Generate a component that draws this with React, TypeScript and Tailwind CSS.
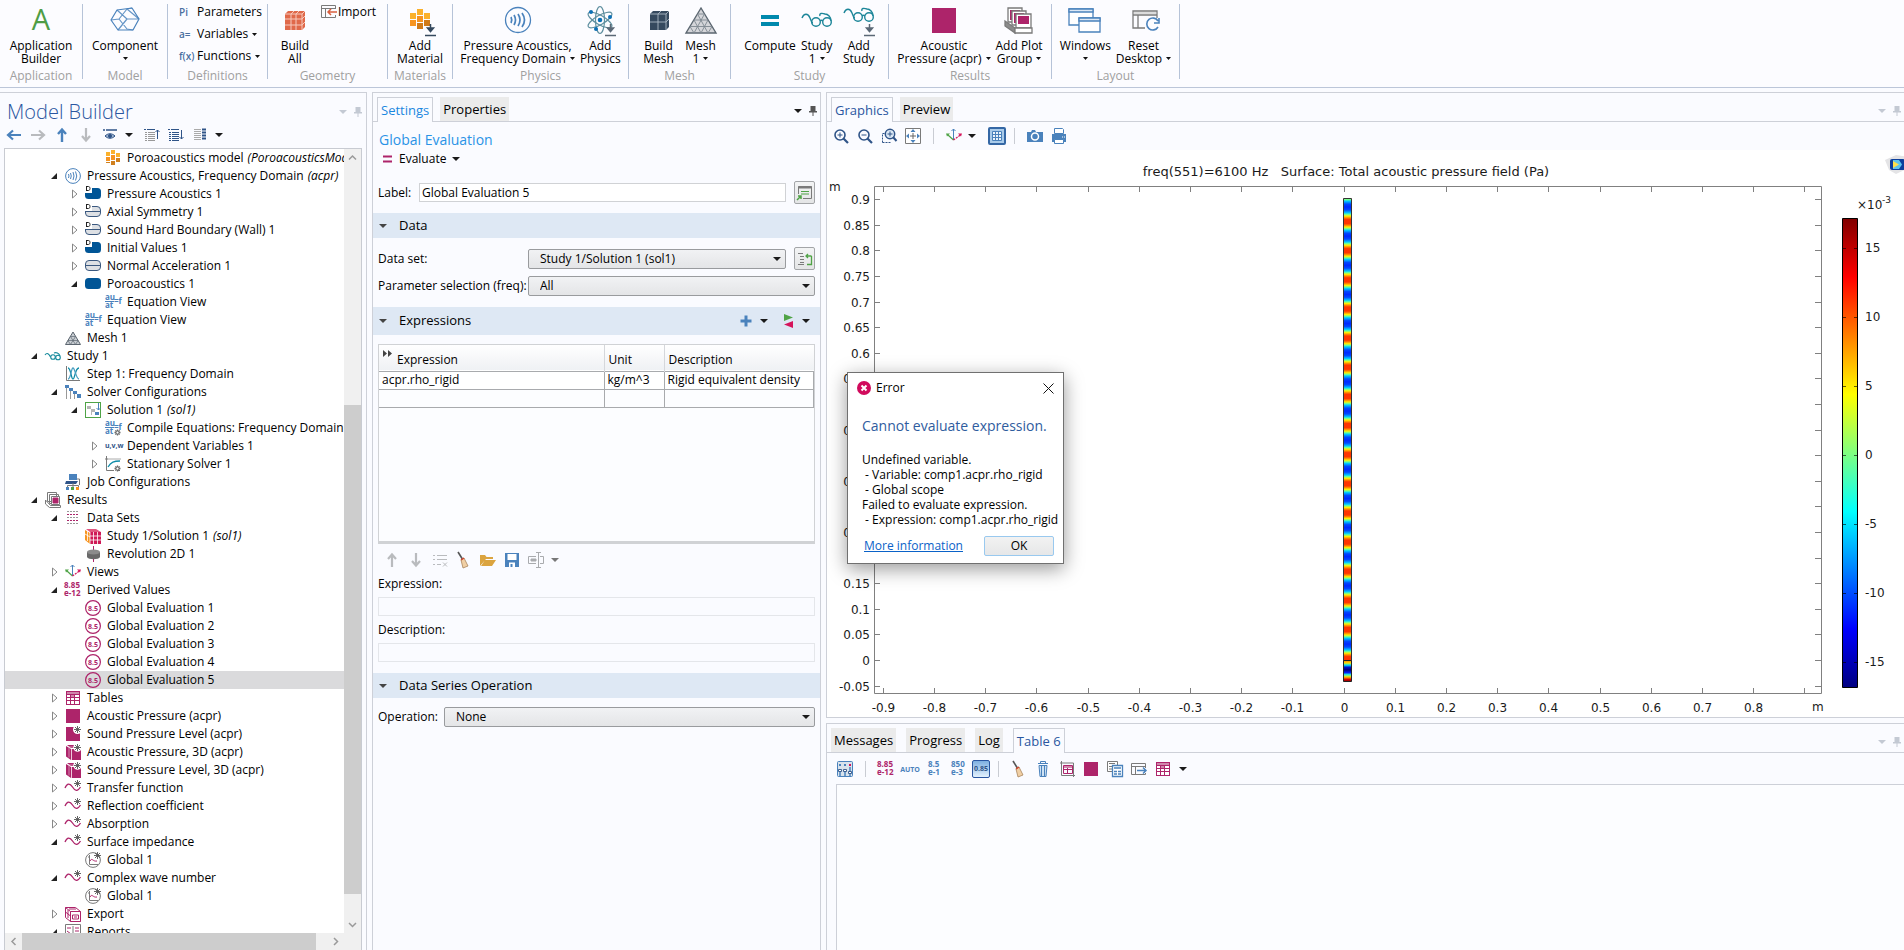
import type { ReactNode } from "react";

/* ---------- icons, 16x16 ---------- */

const PINK = "#ad246a";
const BLUE = "#4a82bc";
const NAVY = "#2f5488";
const GRAY = "#7a7a7a";

const star = (
  <path d="M12.500 0v7M9 3.500h7M10 1l5 5M15 1l-5 5" stroke="#555" strokeWidth=".9" />
);

const gear = (
  <g>
    <path d="M12.500 9.500v6M9.500 12.500h6M10.400 10.400l4.200 4.200M14.600 10.400l-4.200 4.200" stroke="#6b6b6b" strokeWidth="1.300" />
    <circle cx="12.500" cy="12.500" r="1.500" fill="#fff" stroke="#6b6b6b" />
  </g>
);

const equation = (
  <g fill={BLUE} fontSize="8" fontWeight="700">
    <text x="0" y="6">au</text>
    <text x="0" y="14">at</text>
    <text x="9" y="10" fontSize="8">=f</text>
    <path d="M0 7.500h9" stroke={BLUE} />
  </g>
);

const curve = <path d="M0 8c2-5 5-5 7.500-1s5 5 8 0" stroke={PINK} fill="none" strokeWidth="1.300" />;

const dMark = (
  <g>
    <path d="M0 0h7v7H0z" fill="#fff" />
    <path d="M1 .5h2.500c2 0 2 4 0 4H1M1.500.5v4" stroke="#222" fill="none" />
  </g>
);

const boundary = (
  <g>
    <rect x=".5" y="2.500" width="15" height="10" rx="3.500" fill="#dde0e4" stroke="#3a587f" />
    <path d="M1 7.500h14" stroke="#3a587f" />
  </g>
);

const domain = <rect x="0" y="2" width="16" height="11" rx="3.500" fill="#005596" />;

const cubePlot = (
  <g>
    <path d="M1 2l5 3v11l-5-3.500zM2 1h8l5 3H6zM7 5h9v11H7z" fill={PINK} />
    <path d="M6.500 5v11M4 3.500v10M4 3h8" stroke="#e7b3cd" strokeWidth=".7" />
    <circle cx="12.500" cy="3.500" r="4.200" fill="#fff" />
    {star}
  </g>
);

const broom = (
  <g>
    <path d="M2 0l5 8" stroke="#555" strokeWidth="1.600" />
    <path d="M5 8l3-2 4 8-5 2z" fill="#f0cfa4" stroke="#a8845c" strokeWidth=".8" />
    <path d="M5 8l3-2" stroke="#d2452f" strokeWidth="1.500" />
  </g>
);

const axes = (
  <g fill="none">
    <path d="M7.500 12V1M5.500 3l2-2 2 2" stroke={BLUE} />
    <path d="M7.500 12L2 7" stroke="#4fa346" strokeWidth="1.200" />
    <path d="M7.500 12l7-5" stroke="#d5145b" strokeDasharray="2 1" strokeWidth="1.200" />
    <path d="M0 5.500h4l-3 3z" fill="#4fa346" />
    <path d="M12 5.500h4l-1 3z" fill="#d5145b" />
  </g>
);

const grid = (
  <g>
    <path d="M1 1h14v14H1z" fill={PINK} />
    <path d="M2 5h3v2H2zM6 5h3v2H6zM10 5h4v2h-4zM2 8h3v2H2zM6 8h3v2H6zM10 8h4v2h-4zM2 11h3v3H2zM6 11h3v3H6zM10 11h4v3h-4z" fill="#fff" />
    <path d="M6 5h3v2H6zM2 2h12v2H2z" fill="#cf86ab" />
  </g>
);

const magnifier = (
  <g fill="none" stroke={NAVY}>
    <circle cx="7" cy="7" r="5" strokeWidth="1.600" />
    <path d="M10.500 10.500l4.500 4.500" strokeWidth="2.200" />
  </g>
);

const arrowUp = "M8 15V3M4 7l4-4.500L12 7";
const arrowDown = "M8 1v12M4 9l4 4.500L12 9";

const icons: Record<string, ReactNode> = {
  material: (
    <g>
      <path d="M1 2h4v4H1zM6 0h4v4H6zM11 3h4v4h-4z" fill="#fbb12b" />
      <path d="M1 7h4v4H1zM6 5h4v5H6z" fill="#f79420" />
      <path d="M1 12h4v1H1zM6 11h4v4H6zM11 8h4v4h-4z" fill="#d0801f" />
    </g>
  ),
  acoustics: (
    <g fill="none" stroke={BLUE}>
      <circle cx="8" cy="8" r="7.400" />
      <path d="M3.500 6q1 2 0 4M5.500 5q1.500 3 0 6M8 4q2 4 0 8M10.500 3.500q2.500 4.500 0 9" />
    </g>
  ),
  domainD: <g>{domain}{dMark}</g>,
  domain,
  boundaryD: <g>{boundary}{dMark}</g>,
  boundary,
  equation,
  mesh: (
    <g>
      <path d="M8 2l7.500 12.500H.5z" fill="#c9ced3" stroke="#5c6670" />
      <path d="M5.500 6.500h5M3 10.500h10M5.500 6.500l5 8M10.500 6.500l-5 8M3 10.500l2.500 4M13 10.500l-2.500 4" stroke="#5c6670" fill="none" strokeWidth=".7" />
    </g>
  ),
  study: (
    <g fill="none" stroke="#158a9c" strokeWidth="1.100">
      <path d="M0 7c2-3 4-1 5.500 2" />
      <circle cx="8" cy="9" r="2.300" />
      <circle cx="13" cy="9.500" r="2.300" />
      <path d="M9 5c2-1 5 0 6 3" />
    </g>
  ),
  step: (
    <g fill="none">
      <path d="M1.500 0v14.500H15" stroke={GRAY} />
      <path d="M3 2c3 0 3 11 5 11s2-11 6-11" stroke="#0e8ba8" strokeWidth="1.300" />
      <path d="M3 13c3 0 3-11 5-11s3 11 6 11" stroke="#4a9ec0" strokeWidth="1.300" />
    </g>
  ),
  solver: (
    <g>
      <path d="M1.500 3v12M5.500 6v9M9.500 9v6" stroke="#999" />
      <path d="M0 1h4v3H0zM4 4h4v3H4zM8 7h4v3H8zM12 10h4v4h-4z" fill={BLUE} />
    </g>
  ),
  solution: (
    <g>
      <rect x=".5" y=".5" width="15" height="15" fill="#fff" stroke="#4fa346" />
      <path d="M2 4h4v3H2zM6 7h4v3H6z" fill="#b5b5b5" />
      <path d="M6.500 8v5" stroke="#b5b5b5" />
      <path d="M10 10h4v3h-4z" fill={BLUE} />
      <path d="M13.500 1v7M11.500 6l2 2 2-2" stroke={BLUE} fill="none" />
    </g>
  ),
  compile: <g>{equation}{gear}</g>,
  uvw: <text x="0" y="10" fontSize="7" fontWeight="700" fill={NAVY}>u,v,w</text>,
  stationary: (
    <g fill="none">
      <path d="M1.500 0v14.500H9M0 3h3M13 14.500h2" stroke={GRAY} />
      <path d="M2 3h14" stroke="#aaa" />
      <path d="M3 11c3-5 6-6 12-6" stroke="#0e8ba8" strokeWidth="1.300" />
      {gear}
    </g>
  ),
  job: (
    <g>
      <path d="M4 0h8v6H4z" fill={BLUE} />
      <path d="M1 7h12l-2 3H0z" fill={NAVY} />
      <path d="M2.500 13v-1.500h11V13M8 9v4M12 5h2.500v6" stroke={GRAY} fill="none" />
      <path d="M1 13h3v3H1z" fill={BLUE} />
      <path d="M6 13h3v3H6z" fill="#4fa346" />
      <path d="M11 13h3v3h-3z" fill="#f79420" />
    </g>
  ),
  results: (
    <g stroke={GRAY}>
      <path d="M2.500.5h9v9h-9zM4.500 2.500h9v9h-9z" fill="#fff" />
      <path d="M6.500 4.500h8v8h-8z" fill="#fff" />
      <path d="M8 6h5v5H8z" fill={PINK} stroke={PINK} />
      <path d="M.5 8v4l4 3.500h11v-2h-10z" fill="#fff" />
    </g>
  ),
  dataSets: (
    <g strokeDasharray="2 1">
      <path d="M2 1.500h12M2 7.500h12M2 13.500h12" stroke="#999" />
      <path d="M2 4.500h12M2 10.500h12" stroke={PINK} />
    </g>
  ),
  solutionCube: (
    <g>
      <path d="M0 2l5 3v11l-5-4z" fill="#f79420" />
      <path d="M1 1h10l5 3H5z" fill="#e0567f" />
      <path d="M5 4h11v12H5z" fill="#cf1856" />
      <path d="M5 8h11M5 12h11M8.500 4v12M12.500 4v12M5 4v12M2.500 3v10M0 6l5 3" stroke="#fff" strokeWidth=".8" />
    </g>
  ),
  revolution: (
    <g>
      <path d="M8.500 0v16" stroke={PINK} />
      <path d="M2 6v5c1 3 12 3 13 0V6z" fill="#696969" />
      <ellipse cx="8.500" cy="6" rx="6.500" ry="2.500" fill="#8b8b8b" />
    </g>
  ),
  axes,
  derived: (
    <g fill={PINK} fontSize="8" fontWeight="700">
      <text x="-1" y="6">8.85</text>
      <text x="-1" y="14">e-12</text>
    </g>
  ),
  evaluation: (
    <g>
      <circle cx="8" cy="8" r="7.400" fill="none" stroke={PINK} strokeWidth="1.200" />
      <text x="8" y="11" fontSize="7" fontWeight="700" textAnchor="middle" fill={PINK}>8.5</text>
    </g>
  ),
  grid,
  square: <path d="M1 1h14v14H1z" fill={PINK} />,
  squareStar: (
    <g>
      <path d="M1 1h14v14H1z" fill={PINK} />
      <circle cx="12.500" cy="3.500" r="4.500" fill="#fff" />
      {star}
    </g>
  ),
  cubeStar: cubePlot,
  curve: <g>{curve}{star}</g>,
  global: (
    <g>
      <circle cx="8" cy="8" r="7.400" fill="#fff" stroke={GRAY} />
      <path d="M4.500 3v9.500H13M3 5h2" stroke={GRAY} fill="none" />
      <path d="M5 9c2-4 3 1 7 0" stroke={PINK} fill="none" />
      {star}
    </g>
  ),
  exportBox: (
    <g fill="#fff" stroke={PINK}>
      <path d="M.5 1.500h10l5 4v10h-10l-5-4z" />
      <path d="M5.500 5.500h10v10h-10zM.5 1.500l5 4M.5 6l5 4M3 4v8M7.500 9h6v4h-6zM4 3h7M9 11h3" />
    </g>
  ),
  report: (
    <g fill="none">
      <path d="M.5.5h15v14H.5zM8 2v12" stroke={GRAY} />
      <path d="M2 4h4M10 4h4M2 7l4 3M10 7h4" stroke={PINK} />
    </g>
  ),
  back: <path d="M15 8H2M7 3.500L2 8l5 4.500" stroke={BLUE} strokeWidth="2.200" fill="none" />,
  forward: <path d="M1 8h13M9 3.500L14 8l-5 4.500" stroke="#b9bbbe" strokeWidth="2.200" fill="none" />,
  up: <path d={arrowUp} stroke={BLUE} strokeWidth="2.400" fill="none" />,
  upGray: <path d={arrowUp} stroke="#b9bbbe" strokeWidth="2.200" fill="none" />,
  downGray: <path d={arrowDown} stroke="#b9bbbe" strokeWidth="2.200" fill="none" />,
  show: (
    <g fill="none" stroke={NAVY}>
      <path d="M1 3h2M4 3h11" strokeWidth="1.500" />
      <path d="M3 9c3-3 7-3 10 0-3 3-7 3-10 0z" fill="#9db3cf" />
      <circle cx="8" cy="9" r="1.500" fill={NAVY} />
    </g>
  ),
  collapse: (
    <g stroke={NAVY}>
      <path d="M0 2.500h2M3 2.500h8" />
      <path d="M1 5.500h2M4 5.500h7M1 7.500h2M4 7.500h7M1 9.500h2M4 9.500h7M1 11.500h2M4 11.500h7M1 13.500h2M4 13.500h7" stroke="#999" />
      <path d="M13.500 12V3M11.500 5l2-2 2 2" fill="none" />
    </g>
  ),
  expand: (
    <g stroke={NAVY}>
      <path d="M0 2.500h2M3 2.500h8M1 5.500h2M4 5.500h7M1 7.500h2M4 7.500h7M1 9.500h2M4 9.500h7M1 11.500h2M4 11.500h7M1 13.500h2M4 13.500h7" />
      <path d="M13.500 3v9M11.500 10l2 2 2-2" fill="none" />
    </g>
  ),
  columns: (
    <g>
      <path d="M2 2.500h7M2 4.500h7M2 6.500h7M2 8.500h7M2 10.500h7M2 12.500h7" stroke="#aaa" />
      <path d="M10 2.500h4M10 5.500h4M10 8.500h4M10 11.500h4" stroke={NAVY} strokeWidth="2" />
    </g>
  ),
  listX: (
    <path d="M1 3.500h2M5 3.500h10M1 7.500h2M5 7.500h10M1 12.500h2M5 12.500h4M11 10.500l4 4M15 10.500l-4 4" stroke="#b9bbbe" />
  ),
  broom,
  folder: <path d="M0 14V3h5l1.500 2H13v2H6zM5 8h11l-4 6H1z" fill="#dba43f" />,
  save: (
    <g>
      <path d="M1 1h14v14H1z" fill={BLUE} />
      <path d="M3.500 2h9v6h-9zM5 10.500h6V15H5z" fill="#fff" />
      <path d="M6.500 12h2v3h-2z" fill={BLUE} />
    </g>
  ),
  textField: (
    <g stroke="#a9abae" fill="none">
      <path d="M8 4.500H.5v7H8M12 4.500h3.500v7H12M10.500 1v14M8 .5h5M8 15.500h5" />
      <path d="M3 7h5v2H3z" fill="#a9abae" />
    </g>
  ),
  zoomIn: <g>{magnifier}<path d="M4.500 7h5M7 4.500v5" stroke={NAVY} /></g>,
  zoomOut: <g>{magnifier}<path d="M4.500 7h5" stroke={NAVY} /></g>,
  zoomBox: (
    <g>
      <path d="M1.500 14.500v-9h5M1.500 14.500h9" stroke={NAVY} fill="none" strokeDasharray="2 1" />
      <g fill="#dbe8f5" stroke={NAVY}>
        <circle cx="9" cy="6" r="4.700" strokeWidth="1.500" />
        <path d="M12 9l3.500 4" strokeWidth="2" />
      </g>
      <path d="M6.500 6h5M9 3.500v5" stroke={NAVY} />
    </g>
  ),
  extents: (
    <g>
      <path d="M.5.5h15v15H.5z" fill="#fff" stroke={GRAY} />
      <path d="M8 5v6M5 8h6" stroke="#666" />
      <path d="M8 1l2.500 3h-5zM8 15l2.500-3h-5zM1 8l3-2.500v5zM15 8l-3-2.500v5z" fill={BLUE} />
    </g>
  ),
  camera: (
    <g>
      <path d="M0 4h4l1-2h3l1 2h7v10H0z" fill={BLUE} />
      <circle cx="8" cy="8.500" r="3.500" fill={BLUE} stroke="#fff" strokeWidth="1.500" />
    </g>
  ),
  printer: (
    <g>
      <path d="M3.500.5h8l1 1v4h-9z" fill="#fff" stroke={BLUE} />
      <path d="M1 6h14v8H1z" fill={BLUE} />
      <path d="M3.500 11.500h9v4h-9z" fill="#fff" stroke={BLUE} />
      <path d="M11 9h1M13 9h1" stroke="#fff" />
    </g>
  ),
  precision: (
    <g>
      <rect x=".5" y=".5" width="15" height="15" rx="1" fill="#d9e3ec" stroke={BLUE} />
      <path d="M2 3h2v2H2zM7 3h2v2H7z" fill={BLUE} />
      <path d="M12 3h2v2h-2z" fill="#d5145b" />
      <path d="M3 9v6M8 9v6M13 6v9" stroke={BLUE} strokeWidth="1.500" />
      <path d="M1.500 8.500h3v2h-3zM6.500 8.500h3v2h-3zM11.500 10.500h3v2h-3z" fill="#fff" stroke={NAVY} strokeWidth=".9" />
    </g>
  ),
  auto: <text x="8" y="11" fontSize="7" fontWeight="700" textAnchor="middle" fill={BLUE}>AUTO</text>,
  sci: (
    <g fill={BLUE} fontSize="8" fontWeight="700">
      <text x="2" y="6">8.5</text>
      <text x="2" y="14">e-1</text>
    </g>
  ),
  eng: (
    <g fill={BLUE} fontSize="8" fontWeight="700">
      <text x="1" y="6">850</text>
      <text x="1" y="14">e-3</text>
    </g>
  ),
  trash: (
    <g stroke={BLUE} fill="none">
      <path d="M5.500 2V.5h5V2M3 2.500h10" />
      <path d="M4 4.500h8l-1 11H5z" fill="#cfe2f3" />
      <path d="M6.500 5v10M9.500 5v10" />
    </g>
  ),
  tableGraph: (
    <g fill="none">
      <path d="M2.500 0v14.500H16M1 2h13.500v14" stroke={GRAY} />
      <path d="M4.500 4.500h9v8h-9zM4.500 8.500h9M8.500 4.500v8" stroke={PINK} />
      <path d="M5 5h8v2H5z" fill="#cf86ab" />
    </g>
  ),
  copyTable: (
    <g fill="#fff">
      <path d="M.5.5h10v10H.5zM2 2.500h6M2 5.500h3M2 8h3" stroke={GRAY} />
      <path d="M5.500 4.500h10v11h-10zM7 7h7M7 10.500h3M11 10.500h3M7 13h3M11 13h3" stroke={BLUE} strokeWidth="1.300" />
    </g>
  ),
  exportTable: (
    <g fill="none">
      <path d="M14.500 7V2.500H.5v11h14V12M.5 5.500h14M4.500 5.500v8" stroke={GRAY} />
      <path d="M6 9.500h9M12 6.500l3 3-3 3" stroke={BLUE} strokeWidth="1.500" />
    </g>
  ),
  plus: <path d="M8 2.500v11M2.500 8h11" stroke={BLUE} strokeWidth="3" />,
  replace: (
    <g>
      <path d="M4 1l9 3.500L4 8z" fill="#4fa346" />
      <path d="M13 8v7l-9-3.500z" fill="#d5145b" />
    </g>
  ),
  formLabel: (
    <g fill="none">
      <path d="M1.500 9V1.500h13v12H6" stroke={GRAY} />
      <path d="M1 2.500h14" stroke={GRAY} strokeWidth="2" />
      <path d="M4 6.500h8M4 9h8" stroke="#4fa346" />
      <path d="M0 15l4-4M1 11h3v3" stroke="#4fa346" strokeWidth="1.500" />
    </g>
  ),
  gotoSource: (
    <g fill="none">
      <path d="M1 2.500h5M3 5.500h4M3 8.500h4M3 11.500h4M1 13.500h6" stroke={GRAY} />
      <path d="M14.500 5v8.500H10M14.500 5H9M11 3L9 5l2 2" stroke="#4fa346" strokeWidth="1.300" />
    </g>
  ),
  evaluate: <path d="M2 5.500h9M2 10.500h9" stroke={PINK} strokeWidth="2" />,
  importIcon: (
    <g fill="none">
      <path d="M14.500 5V1.500H.5v12h14V11M.5 4.500h14M4.500 4.500v9" stroke={GRAY} />
      <path d="M16 8H7M10 5L7 8l3 3" stroke="#d95f3f" strokeWidth="1.500" />
    </g>
  ),
};

function Icon({ name }: { name: string }) {
  return (
    <svg viewBox="0 0 16 16" className="size-4 shrink-0 overflow-visible" aria-hidden="true">
      {icons[name]}
    </svg>
  );
}

function Caret({ color = "#1a1a1a" }: { color?: string }) {
  return (
    <svg viewBox="0 0 8 4" className="h-1 w-2 shrink-0" aria-hidden="true">
      <path d="M0 0h8L4 4z" fill={color} />
    </svg>
  );
}

function SmallCaret() {
  return (
    <svg viewBox="0 0 5 3" className="h-[3px] w-[5px] shrink-0" aria-hidden="true">
      <path d="M0 0h5L2.500 3z" fill="#111" />
    </svg>
  );
}

function Pin({ color = "#555" }: { color?: string }) {
  return (
    <svg viewBox="0 0 8 10" className="h-[10px] w-2 shrink-0" aria-hidden="true">
      <path d="M1.500 0h5v5H8v1.500H0V5h1.500zM3.500 6.500h1V10h-1z" fill={color} />
    </svg>
  );
}

/* ---------- ribbon ---------- */

const download = (c: string) => <path d="M26.500 20v7M23.500 24l3 3.500 3-3.500zM21 31.500h11" stroke={c} strokeWidth="1.500" fill={c} />;

const glasses = (
  <g fill="none" stroke="#1d8699" strokeWidth="1.400">
    <path d="M1 14c2-5 6-5 8 0s2 5 3 5" />
    <circle cx="15" cy="18" r="4.300" />
    <circle cx="26" cy="18" r="4.300" />
    <path d="M19 17c1-1 2-1 3 0M19 12c-1-3 2-3 5-2 3 0 6 3 6 7" />
  </g>
);

const bigIcons: Record<string, ReactNode> = {
  app: <text x="16" y="26" fontSize="29" textAnchor="middle" fill="#4f9d45">A</text>,
  component: (
    <g fill="none" stroke={BLUE} strokeWidth="1.200" strokeLinejoin="round">
      <path d="M2 16l6-10 15-2 7 11-6 11H9z" />
      <path d="M2 16l8-1 8-10 5-1M10 15l8 10 6 1M18 5l12 10M8 6l10 9-9 11M18 15l12 0" opacity=".85" />
    </g>
  ),
  buildAll: (
    <g>
      <path d="M6 10l3-3h17v16l-3 3H6z" fill="#e0694a" />
      <path d="M6 10h17v16M23 10l3-3M6 15h17l3-3M6 21h17l3-3M12 26V10l3-3M17 26V10l3-3" stroke="#f7cabd" fill="none" />
    </g>
  ),
  material: (
    <g>
      <path d="M6 9h6v6H6zM13 5h6v6h-6zM20 9h6v6h-6z" fill="#fbb12b" />
      <path d="M6 16h6v6H6zM13 12h6v6h-6z" fill="#f79420" />
      <path d="M13 19h6v6h-6zM20 16h6v6h-6z" fill="#d07a18" />
      {download("#35495e")}
    </g>
  ),
  acoustics: (
    <g fill="none" stroke={BLUE} strokeWidth="1.300">
      <circle cx="16" cy="16" r="12.500" />
      <path d="M9 13q1.500 3 0 6M12 11q3 5 0 10M16 10q4 6 0 12M20 9q5 7 0 14" strokeWidth="1.700" />
    </g>
  ),
  physics: (
    <g>
      <g fill="none" stroke="#5e8f9f" strokeWidth="1.200">
        <ellipse cx="16" cy="16" rx="4.500" ry="13.500" />
        <ellipse cx="16" cy="16" rx="4.500" ry="13.500" transform="rotate(60 16 16)" />
        <ellipse cx="16" cy="16" rx="4.500" ry="13.500" transform="rotate(-60 16 16)" />
      </g>
      <g fill="#0c70b5">
        <circle cx="16" cy="16" r="2.300" />
        <circle cx="7" cy="8" r="2" />
        <circle cx="26" cy="13" r="2" />
        <circle cx="12" cy="25" r="2" />
      </g>
      {download("#5b6876")}
    </g>
  ),
  buildMesh: (
    <g>
      <path d="M7 10l3-3h16v16l-3 3H7z" fill="#35495e" />
      <path d="M7 10h16v16M23 10l3-3M7 18h16l3-3M15 26V10l3-3" stroke="#aab8c4" fill="none" strokeWidth=".9" />
    </g>
  ),
  mesh: (
    <g>
      <path d="M16 4l15 25H1z" fill="#d4d5d9" stroke="#5b6670" strokeWidth="1.400" />
      <path d="M12.500 10h7M9 16h14M5 22.500h22M12.500 10L23 29M9 16l7 13M5 22.500l4 6.500M19.500 10L9 29M23 16l-7 13M27 22.500L23 29" stroke="#7d8790" fill="none" strokeWidth=".9" />
    </g>
  ),
  compute: <path d="M7 13h18M7 20h18" stroke="#0089ad" strokeWidth="4" />,
  study: glasses,
  addStudy: <g><g transform="translate(0 -5)">{glasses}</g>{download("#5b6876")}</g>,
  square: <path d="M4 4h24v25H4z" fill={PINK} />,
  plotGroup: (
    <g stroke={GRAY} strokeWidth="1.300">
      <path d="M5 4h14v14H5z" fill="#fff" />
      <path d="M7 6h10v10H7z" fill={PINK} stroke="none" />
      <path d="M9 7h14v14H9z" fill="#fff" />
      <path d="M11 9h10v10H11z" fill={PINK} stroke="none" />
      <path d="M13 10h15v14H13z" fill="#fff" />
      <path d="M15 12h11v8H15z" fill={PINK} stroke="none" />
      <path d="M2 17l10 7v5L2 22z" fill="#8b8b8b" />
      <path d="M12 24h17v5H12z" fill="#fff" />
    </g>
  ),
  windows: (
    <g fill="#fff" stroke={BLUE} strokeWidth="1.300">
      <path d="M0 5h24v16H0z" />
      <path d="M0 5h24v3H0z" fill="#dce8f5" />
      <path d="M10 14h21v14H10z" />
      <path d="M10 14h21v3H10z" fill="#dce8f5" />
    </g>
  ),
  reset: (
    <g fill="none">
      <path d="M29 14V7H5v17h12M5 11h24M10 11v13" stroke={GRAY} strokeWidth="1.300" />
      <path d="M6 8h22v2H6z" fill="#dcdcdc" />
      <path d="M30 17a6 6 0 1 0 0 6M31 14v5h-5" stroke={BLUE} strokeWidth="1.600" />
    </g>
  ),
};

function BigButton({ icon, line1, line2 = "", caret = false }: { icon: string; line1: string; line2?: string; caret?: boolean }) {
  return (
    <button type="button" className="flex flex-col items-center leading-[13px] whitespace-nowrap">
      <svg viewBox="0 0 32 32" className="mb-[3px] size-8 shrink-0 overflow-visible" aria-hidden="true">
        {bigIcons[icon]}
      </svg>
      <span>{line1}</span>
      <span className="flex h-[13px] items-center gap-1">
        {line2}
        {caret && <SmallCaret />}
      </span>
    </button>
  );
}

function Group({ title, width, children }: { title: string; width: string; children: ReactNode }) {
  return (
    <section className={`flex h-[75px] shrink-0 flex-col border-r border-[#b6c3d8] ${width}`}>
      <div className="flex flex-1 items-start justify-center gap-[5px]">{children}</div>
      <h2 className="-mb-1 h-[14px] text-center leading-[14px] text-[#a0a0a0]">{title}</h2>
    </section>
  );
}

const definitions = [
  { mark: "Pi", text: "Parameters", caret: false },
  { mark: "a=", text: "Variables", caret: true },
  { mark: "f(x)", text: "Functions", caret: true },
];

function Ribbon() {
  return (
    <header className="flex h-[88px] shrink-0 overflow-hidden border-b border-[#bcc6d9] bg-[#fcfcff] pt-1">
      <Group title="Application" width="w-[83px]">
        <BigButton icon="app" line1="Application" line2="Builder" />
      </Group>
      <Group title="Model" width="w-[85px]">
        <BigButton icon="component" line1="Component" caret />
      </Group>
      <Group title="Definitions" width="w-[100px]">
        <div className="flex flex-1 flex-col gap-[6px] pl-[11px]">
          {definitions.map((d) => (
            <button key={d.text} type="button" className="flex h-4 items-center whitespace-nowrap">
              <span className="w-[18px] text-left text-[10px] font-semibold text-[#4a6f9f]">{d.mark}</span>
              <span className="mr-1">{d.text}</span>
              {d.caret && <SmallCaret />}
            </button>
          ))}
        </div>
      </Group>
      <Group title="Geometry" width="w-[120px]">
        <BigButton icon="buildAll" line1="Build" line2="All" />
        <span />
        <button type="button" className="flex h-4 items-center">
          <Icon name="importIcon" />
          <span className="ml-px">Import</span>
        </button>
      </Group>
      <Group title="Materials" width="w-[65px]">
        <BigButton icon="material" line1="Add" line2="Material" />
      </Group>
      <Group title="Physics" width="w-[176px]">
        <BigButton icon="acoustics" line1="Pressure Acoustics," line2="Frequency Domain" caret />
        <BigButton icon="physics" line1="Add" line2="Physics" />
      </Group>
      <Group title="Mesh" width="w-[102px]">
        <BigButton icon="buildMesh" line1="Build" line2="Mesh" />
        <span />
        <BigButton icon="mesh" line1="Mesh" line2="1" caret />
      </Group>
      <Group title="Study" width="w-[158px]">
        <BigButton icon="compute" line1="Compute" />
        <BigButton icon="study" line1="Study" line2="1" caret />
        <span />
        <BigButton icon="addStudy" line1="Add" line2="Study" />
      </Group>
      <Group title="Results" width="w-[163px]">
        <BigButton icon="square" line1="Acoustic" line2="Pressure (acpr)" caret />
        <BigButton icon="plotGroup" line1="Add Plot" line2="Group" caret />
      </Group>
      <Group title="Layout" width="w-[128px]">
        <BigButton icon="windows" line1="Windows" caret />
        <BigButton icon="reset" line1="Reset" line2="Desktop" caret />
      </Group>
    </header>
  );
}

/* ---------- model tree ---------- */

type Node = { depth: number; icon: string; text: string; tag?: string; state?: "open" | "closed"; selected?: boolean };

const tree: Node[] = [
  { depth: 3, icon: "material", text: "Poroacoustics model", tag: "(PoroacousticsModel)" },
  { depth: 1, icon: "acoustics", text: "Pressure Acoustics, Frequency Domain", tag: "(acpr)", state: "open" },
  { depth: 2, icon: "domainD", text: "Pressure Acoustics 1", state: "closed" },
  { depth: 2, icon: "boundaryD", text: "Axial Symmetry 1", state: "closed" },
  { depth: 2, icon: "boundaryD", text: "Sound Hard Boundary (Wall) 1", state: "closed" },
  { depth: 2, icon: "domainD", text: "Initial Values 1", state: "closed" },
  { depth: 2, icon: "boundary", text: "Normal Acceleration 1", state: "closed" },
  { depth: 2, icon: "domain", text: "Poroacoustics 1", state: "open" },
  { depth: 3, icon: "equation", text: "Equation View" },
  { depth: 2, icon: "equation", text: "Equation View" },
  { depth: 1, icon: "mesh", text: "Mesh 1" },
  { depth: 0, icon: "study", text: "Study 1", state: "open" },
  { depth: 1, icon: "step", text: "Step 1: Frequency Domain" },
  { depth: 1, icon: "solver", text: "Solver Configurations", state: "open" },
  { depth: 2, icon: "solution", text: "Solution 1", tag: "(sol1)", state: "open" },
  { depth: 3, icon: "compile", text: "Compile Equations: Frequency Domain" },
  { depth: 3, icon: "uvw", text: "Dependent Variables 1", state: "closed" },
  { depth: 3, icon: "stationary", text: "Stationary Solver 1", state: "closed" },
  { depth: 1, icon: "job", text: "Job Configurations" },
  { depth: 0, icon: "results", text: "Results", state: "open" },
  { depth: 1, icon: "dataSets", text: "Data Sets", state: "open" },
  { depth: 2, icon: "solutionCube", text: "Study 1/Solution 1", tag: "(sol1)" },
  { depth: 2, icon: "revolution", text: "Revolution 2D 1" },
  { depth: 1, icon: "axes", text: "Views", state: "closed" },
  { depth: 1, icon: "derived", text: "Derived Values", state: "open" },
  { depth: 2, icon: "evaluation", text: "Global Evaluation 1" },
  { depth: 2, icon: "evaluation", text: "Global Evaluation 2" },
  { depth: 2, icon: "evaluation", text: "Global Evaluation 3" },
  { depth: 2, icon: "evaluation", text: "Global Evaluation 4" },
  { depth: 2, icon: "evaluation", text: "Global Evaluation 5", selected: true },
  { depth: 1, icon: "grid", text: "Tables", state: "closed" },
  { depth: 1, icon: "square", text: "Acoustic Pressure (acpr)", state: "closed" },
  { depth: 1, icon: "squareStar", text: "Sound Pressure Level (acpr)", state: "closed" },
  { depth: 1, icon: "cubeStar", text: "Acoustic Pressure, 3D (acpr)", state: "closed" },
  { depth: 1, icon: "cubeStar", text: "Sound Pressure Level, 3D (acpr)", state: "closed" },
  { depth: 1, icon: "curve", text: "Transfer function", state: "closed" },
  { depth: 1, icon: "curve", text: "Reflection coefficient", state: "closed" },
  { depth: 1, icon: "curve", text: "Absorption", state: "closed" },
  { depth: 1, icon: "curve", text: "Surface impedance", state: "open" },
  { depth: 2, icon: "global", text: "Global 1" },
  { depth: 1, icon: "curve", text: "Complex wave number", state: "open" },
  { depth: 2, icon: "global", text: "Global 1" },
  { depth: 1, icon: "exportBox", text: "Export", state: "closed" },
  { depth: 1, icon: "report", text: "Reports", state: "open" },
];

const indents = ["pl-[20px]", "pl-[40px]", "pl-[60px]", "pl-[80px]"];

function TreeRow({ node }: { node: Node }) {
  return (
    <li className={`flex h-[18px] items-center whitespace-nowrap ${indents[node.depth]} ${node.selected ? "bg-[#dadadc]" : ""}`}>
      <svg viewBox="0 0 20 10" className="h-[10px] w-5 shrink-0" aria-hidden="true">
        {node.state === "open" && <path d="M6 8L12 2v6z" fill="#222" />}
        {node.state === "closed" && <path d="M7.500 1L12 5 7.500 9z" fill="#fff" stroke="#888" />}
      </svg>
      <Icon name={node.icon} />
      <span className="ml-[6px]">{node.text}</span>
      {node.tag && <i className="ml-1">{node.tag}</i>}
    </li>
  );
}

function Chevron({ d }: { d: string }) {
  return (
    <svg viewBox="0 0 17 17" className="size-[17px] shrink-0" aria-hidden="true">
      <path d={d} fill="none" stroke="#9a9a9a" strokeWidth="1.500" />
    </svg>
  );
}

function ToolButton({ name }: { name: string }) {
  return (
    <button type="button" aria-label={name} className="flex w-6 justify-center">
      <Icon name={name} />
    </button>
  );
}

function ModelBuilder() {
  return (
    <aside className="flex w-[367px] shrink-0 flex-col border-t border-r border-[#cdd0d8]">
      <div className="mt-[5px] flex h-[27px] items-center pr-1 pl-[7px]">
        <h1 className="flex-1 text-[20px] font-light text-[#2a56a0]">Model Builder</h1>
        <Caret color="#c3c9d3" />
        <span className="w-[7px]" />
        <Pin color="#c3c9d3" />
      </div>
      <div className="flex h-5 items-center pl-[2px]">
        <ToolButton name="back" />
        <ToolButton name="forward" />
        <ToolButton name="up" />
        <ToolButton name="downGray" />
        <ToolButton name="show" />
        <span className="mr-1 flex w-[14px] justify-center"><Caret /></span>
        <ToolButton name="collapse" />
        <ToolButton name="expand" />
        <ToolButton name="columns" />
        <span className="flex w-[14px] justify-center"><Caret /></span>
      </div>
      <div className="mx-1 mt-[3px] flex min-h-0 flex-1 flex-col border-x border-t border-[#c8cbd2] bg-white">
        <div className="flex min-h-0 flex-1">
          <ul className="min-w-0 flex-1 overflow-hidden">
            {tree.map((n, i) => (
              <TreeRow key={i} node={n} />
            ))}
          </ul>
          <div className="flex w-[17px] shrink-0 flex-col bg-[#f0f0f0]">
            <Chevron d="M5 10.500l3.500-3.500 3.500 3.500" />
            <div className="flex-[239]" />
            <div className="flex-[489] bg-[#cdcdcd]" />
            <div className="flex-[22]" />
            <Chevron d="M5 7l3.500 3.500L12 7" />
          </div>
        </div>
        <div className="flex h-[17px] shrink-0 bg-[#f0f0f0]">
          <Chevron d="M10.500 5L7 8.500l3.500 3.500" />
          <div className="flex-[295] bg-[#cdcdcd]" />
          <div className="flex-[11]" />
          <Chevron d="M7 5l3.500 3.500L7 12" />
          <div className="w-[17px]" />
        </div>
      </div>
    </aside>
  );
}

/* ---------- shared panel parts ---------- */

function Tab({ text, active = false, color = "text-[#2a56a0]" }: { text: string; active?: boolean; color?: string }) {
  return active ? (
    <button type="button" role="tab" aria-selected className={`-mb-px h-[25px] border border-b-0 border-[#cdd0d8] bg-[#fafbff] px-[3px] pt-[2px] ${color}`}>
      {text}
    </button>
  ) : (
    <button type="button" role="tab" aria-selected={false} className="h-6 bg-[#ebebeb] px-[3px] pt-[2px] text-black">
      {text}
    </button>
  );
}

function TabBar({ children, color, gap = "gap-[7px]" }: { children: ReactNode; color?: string; gap?: string }) {
  return (
    <div className="flex h-[29px] shrink-0 items-end border-b border-[#cdd0d8] pr-[3px] pl-1">
      <div role="tablist" className={`flex flex-1 items-end text-[13px] ${gap}`}>{children}</div>
      <div className="flex h-5 items-center gap-[7px]">
        <Caret color={color} />
        <Pin color={color} />
      </div>
    </div>
  );
}

function SectionHeader({ title, height, children }: { title: string; height: string; children?: ReactNode }) {
  return (
    <div className={`flex shrink-0 items-center bg-[#dee8f4] pr-[10px] pl-[6px] ${height}`}>
      <Caret color="#444" />
      <h3 className="ml-3 flex-1 text-[13px]">{title}</h3>
      {children}
    </div>
  );
}

function Select({ id, value, className }: { id: string; value: string; className: string }) {
  return (
    <div className={`grid items-center ${className}`}>
      <select id={id} className="col-start-1 row-start-1 h-5 w-full appearance-none rounded-[2px] border border-[#999b9e] bg-linear-to-b from-[#f1f2f4] to-[#e4e5e7] pl-[11px] leading-[16px]">
        <option>{value}</option>
      </select>
      <span className="pointer-events-none col-start-1 row-start-1 mr-[5px] justify-self-end">
        <Caret />
      </span>
    </div>
  );
}

const smallButton = "flex h-[23px] w-[21px] shrink-0 items-center justify-center rounded-[2px] border border-[#a3a5a8] bg-linear-to-b from-[#f3f4f5] to-[#e4e5e6]";

function Settings() {
  return (
    <section className="flex w-[449px] shrink-0 flex-col border border-b-0 border-[#cdd0d8]">
      <TabBar>
        <Tab text="Settings" active color="text-[#1a87e0]" />
        <Tab text="Properties" />
      </TabBar>
      <h2 className="mt-[7px] h-[22px] pl-[6px] text-[14px] leading-[22px] text-[#2a93e6]">Global Evaluation</h2>
      <button type="button" className="flex h-4 items-center pl-[8px]">
        <Icon name="evaluate" />
        <span className="mr-[6px] ml-[2px]">Evaluate</span>
        <Caret />
      </button>
      <div className="mt-[14px] flex h-[23px] items-center pr-[5px] pl-[5px]">
        <label htmlFor="label" className="w-[41px]">Label:</label>
        <input id="label" defaultValue="Global Evaluation 5" className="mr-2 h-[19px] min-w-0 flex-1 border border-[#d0d2d5] bg-white px-[2px]" />
        <button type="button" aria-label="Edit label" className={smallButton}><Icon name="formLabel" /></button>
      </div>

      <div className="mt-[9px]"><SectionHeader title="Data" height="h-[25px]" /></div>
      <div className="mt-[9px] flex h-[23px] items-center pr-[5px] pl-[5px]">
        <label htmlFor="dataset" className="w-[150px]">Data set:</label>
        <Select id="dataset" value="Study 1/Solution 1 (sol1)" className="mr-2 flex-1" />
        <button type="button" aria-label="Go to source" className={smallButton}><Icon name="gotoSource" /></button>
      </div>
      <div className="mt-[6px] flex h-5 items-center pr-[5px] pl-[5px]">
        <label htmlFor="freq" className="w-[150px] whitespace-nowrap">Parameter selection (freq):</label>
        <Select id="freq" value="All" className="flex-1" />
      </div>

      <div className="mt-[11px]">
        <SectionHeader title="Expressions" height="h-7">
          <Icon name="plus" />
          <span className="mr-3 ml-[6px]"><Caret /></span>
          <Icon name="replace" />
          <span className="ml-[6px]"><Caret /></span>
        </SectionHeader>
      </div>
      <div className="mx-[5px] mt-[9px] h-[200px] border border-b-[3px] border-[#d0d2d5] bg-[#fcfdff]">
        <table className="w-full table-fixed border-collapse text-left">
          <thead>
            <tr className="h-[26px] border-b border-[#a8aaad] bg-linear-to-b from-white to-[#eff1f4]">
              <th className="w-[225px] border-r border-[#d5d7db] pt-1 font-normal">
                <div className="flex">
                  <svg viewBox="0 0 10 8" className="mt-[-1px] ml-1 h-2 w-[10px] overflow-visible" aria-hidden="true">
                    <path d="M0 0l4 3.500L0 7zM5 0l4 3.500L5 7z" fill="#444" />
                  </svg>
                  <span className="ml-1">Expression</span>
                </div>
              </th>
              <th className="w-[60px] border-r border-[#d5d7db] px-1 pt-1 font-normal">Unit</th>
              <th className="px-1 pt-1 font-normal">Description</th>
            </tr>
          </thead>
          <tbody className="[&_td]:border [&_td]:border-l-0 [&_td]:border-[#a8aaad] [&_td]:px-[3px] [&_td]:whitespace-nowrap">
            <tr className="h-[18px] bg-white leading-[16px]">
              <td>acpr.rho_rigid</td>
              <td>kg/m^3</td>
              <td>Rigid equivalent density</td>
            </tr>
            <tr className="h-[18px]">
              <td />
              <td />
              <td />
            </tr>
          </tbody>
        </table>
      </div>
      <div className="flex h-8 items-center pl-[7px]">
        <ToolButton name="upGray" />
        <ToolButton name="downGray" />
        <ToolButton name="listX" />
        <ToolButton name="broom" />
        <ToolButton name="folder" />
        <ToolButton name="save" />
        <ToolButton name="textField" />
        <span className="ml-[3px]"><Caret color="#777" /></span>
      </div>
      <label htmlFor="expr" className="h-4 pl-[5px] leading-4">Expression:</label>
      <input id="expr" className="mx-[5px] mt-[5px] h-[19px] border border-[#e4e6ea]" />
      <label htmlFor="desc" className="mt-[6px] h-4 pl-[5px] leading-4">Description:</label>
      <input id="desc" className="mx-[5px] mt-[5px] h-[19px] border border-[#e4e6ea]" />

      <div className="mt-[11px]"><SectionHeader title="Data Series Operation" height="h-[25px]" /></div>
      <div className="mt-[9px] flex h-5 items-center pr-[5px] pl-[5px]">
        <label htmlFor="operation" className="w-[66px]">Operation:</label>
        <Select id="operation" value="None" className="flex-1" />
      </div>
    </section>
  );
}

/* ---------- plot ---------- */

const xTicks = Array.from({ length: 19 }, (_, i) => i - 9);
const yTicks = Array.from({ length: 20 }, (_, i) => i - 1);
const barTicks = [15, 10, 5, 0, -5, -10, -15];

const px = (n: number) => Math.round(516.5 + n * 51.2) + 0.5;
const py = (n: number) => Math.round(510 - n * 25.6) + 0.5;

function Plot() {
  return (
    <svg viewBox="0 0 1077 567" className="min-h-0 w-full flex-1 bg-white font-['DejaVu_Sans',sans-serif]" role="img" aria-label="Total acoustic pressure field">
      <defs>
        <linearGradient id="wave" gradientUnits="userSpaceOnUse" x1="0" x2="0" y1="57" y2="86.140" spreadMethod="repeat">
          <stop offset="0" stopColor="#0028ff" />
          <stop offset=".1" stopColor="#0048ff" />
          <stop offset=".2" stopColor="#00c8ff" />
          <stop offset=".25" stopColor="#60ffa0" />
          <stop offset=".31" stopColor="#fff000" />
          <stop offset=".38" stopColor="#ff7800" />
          <stop offset=".43" stopColor="#ff3400" />
          <stop offset=".57" stopColor="#ff3400" />
          <stop offset=".62" stopColor="#ff7800" />
          <stop offset=".69" stopColor="#fff000" />
          <stop offset=".75" stopColor="#60ffa0" />
          <stop offset=".8" stopColor="#00c8ff" />
          <stop offset=".9" stopColor="#0048ff" />
          <stop offset="1" stopColor="#0028ff" />
        </linearGradient>
        <linearGradient id="end" x1="0" x2="0" y1="0" y2="1">
          <stop offset="0" stopColor="#ff7a00" />
          <stop offset=".12" stopColor="#ffe600" />
          <stop offset=".22" stopColor="#00e0ff" />
          <stop offset=".32" stopColor="#0010d0" />
          <stop offset=".44" stopColor="#000080" />
          <stop offset=".58" stopColor="#0020ff" />
          <stop offset=".68" stopColor="#30ffd0" />
          <stop offset=".78" stopColor="#ffd000" />
          <stop offset=".9" stopColor="#e00000" />
          <stop offset="1" stopColor="#800000" />
        </linearGradient>
        <linearGradient id="jet" x1="0" x2="0" y1="0" y2="1">
          <stop offset="0" stopColor="#800000" />
          <stop offset=".125" stopColor="#f00" />
          <stop offset=".375" stopColor="#ff0" />
          <stop offset=".625" stopColor="#0ff" />
          <stop offset=".875" stopColor="#00f" />
          <stop offset="1" stopColor="#000080" />
        </linearGradient>
      </defs>

      <path d="M47.500 36.500h947v507h-947z" fill="none" stroke="#808080" />
      {xTicks.map((n) => (
        <path key={n} d={`M${px(n)} 37v5M${px(n)} 543v-5`} stroke="#808080" />
      ))}
      {yTicks.map((n) => (
        <path key={n} d={`M47 ${py(n)}h6M994 ${py(n)}h-6`} stroke="#808080" />
      ))}

      <g fontSize="12" fill="#1a1a1a">
        <text x="519" y="26" fontSize="13" textAnchor="middle" className="whitespace-pre">
          {"freq(551)=6100 Hz   Surface: Total acoustic pressure field (Pa)"}
        </text>
        <text x="2" y="41">m</text>
        <text x="985" y="561">m</text>
        {xTicks.slice(0, 18).map((n) => (
          <text key={n} x={px(n)} y="562" textAnchor="middle">{n / 10}</text>
        ))}
        {yTicks.map((n) => (
          <text key={n} x="43" y={py(n) + 4} textAnchor="end">{n / 20}</text>
        ))}
        {barTicks.map((n) => (
          <text key={n} x="1038" y={Math.round(309 - n * 13.8)}>{n}</text>
        ))}
        <text x="1030" y="59">×10</text>
        <text x="1055" y="53" fontSize="9">-3</text>
      </g>

      <path d="M516.500 48.500h8v462h-8z" fill="url(#wave)" stroke="#333" />
      <path d="M516.500 510.500h8v21h-8z" fill="url(#end)" stroke="#222" />

      <path d="M1015.500 68.500h15v469h-15z" fill="url(#jet)" stroke="#000" />
      {barTicks.map((n) => (
        <path key={n} d={`M1016 ${Math.round(305 - n * 13.8) + 0.5}h3M1027 ${Math.round(305 - n * 13.8) + 0.5}h3`} stroke="#000" strokeOpacity=".6" />
      ))}

      <path d="M1058 10l11-5 12 2-1 12-11 5-7-4z" fill="#e4e4e6" />
      <rect x="1063" y="9" width="15" height="11" rx="2" fill="#0c3f9c" />
      <path d="M1066 10h6l3 4.500-3 4.500h-6z" fill="#5cc4ee" />
      <path d="M1066 11l6 3.500-6 3.500z" fill="#ffe14a" />
    </svg>
  );
}

function Separator() {
  return <span className="mx-2 h-4 w-px bg-[#c9ccd3]" />;
}

function Graphics() {
  return (
    <section className="flex min-h-0 flex-1 flex-col border border-r-0 border-[#cdd0d8]">
      <TabBar color="#c3c9d3">
        <Tab text="Graphics" active />
        <Tab text="Preview" />
      </TabBar>
      <div className="flex h-7 shrink-0 items-center pl-[2px]">
        <ToolButton name="zoomIn" />
        <ToolButton name="zoomOut" />
        <ToolButton name="zoomBox" />
        <ToolButton name="extents" />
        <Separator />
        <ToolButton name="axes" />
        <span className="mr-3 ml-[2px]"><Caret /></span>
        <button type="button" aria-label="grid" className="flex size-[18px] items-center justify-center rounded-[2px] border-2 border-[#3467a5] bg-[#a9cbea]">
          <svg viewBox="0 0 12 12" className="size-3" aria-hidden="true">
            <path d="M1.500 1.500h9v9h-9zM4.500 1.500v9M7.500 1.500v9M1.500 4.500h9M1.500 7.500h9" fill="#eaf3fb" stroke={BLUE} />
          </svg>
        </button>
        <Separator />
        <ToolButton name="camera" />
        <ToolButton name="printer" />
      </div>
      <Plot />
    </section>
  );
}

function Messages() {
  return (
    <section className="flex h-[227px] shrink-0 flex-col border border-r-0 border-b-0 border-[#cdd0d8]">
      <TabBar color="#c3c9d3" gap="gap-[10px]">
        <Tab text="Messages" />
        <Tab text="Progress" />
        <Tab text="Log" />
        <Tab text="Table 6" active />
      </TabBar>
      <div className="flex h-[31px] shrink-0 items-center pl-[6px]">
        <ToolButton name="precision" />
        <Separator />
        <ToolButton name="derived" />
        <ToolButton name="auto" />
        <ToolButton name="sci" />
        <ToolButton name="eng" />
        <button type="button" className="ml-[2px] h-[18px] w-[18px] rounded-[2px] border border-[#2a56a0] bg-linear-to-b from-[#7eb0e0] to-[#e3f1fd] text-center text-[7px] leading-[16px] font-bold text-[#2f5488]">
          0.85
        </button>
        <Separator />
        <ToolButton name="broom" />
        <ToolButton name="trash" />
        <ToolButton name="tableGraph" />
        <ToolButton name="square" />
        <ToolButton name="copyTable" />
        <ToolButton name="exportTable" />
        <ToolButton name="grid" />
        <span className="ml-1"><Caret /></span>
      </div>
      <div className="ml-[9px] flex-1 border-t border-l border-[#cdd0d8] bg-[#fcfdff]" />
    </section>
  );
}

/* ---------- error dialog ---------- */

function ErrorDialog() {
  return (
    <div role="dialog" aria-label="Error" className="absolute top-[372px] left-[847px] flex h-[192px] w-[217px] flex-col border border-[#707070] bg-white pr-[9px] pl-[14px] shadow-[0_5px_18px_rgba(0,0,0,0.4)]">
      <div className="mt-[5px] flex h-5 items-center">
        <svg viewBox="0 0 14 14" className="-ml-[5px] size-[14px]" aria-hidden="true">
          <circle cx="7" cy="7" r="7" fill="#d10a5c" />
          <path d="M4.500 4.500l5 5M9.500 4.500l-5 5" stroke="#fff" strokeWidth="2" />
        </svg>
        <span className="ml-[5px] flex-1">Error</span>
        <button type="button" aria-label="Close">
          <svg viewBox="0 0 11 11" className="size-[11px]" aria-hidden="true">
            <path d="M.5.5l10 10M10.500.5l-10 10" stroke="#111" />
          </svg>
        </button>
      </div>
      <h2 className="mt-[18px] h-5 text-[14px] leading-5 whitespace-nowrap text-[#2f5c9e]">Cannot evaluate expression.</h2>
      <p className="mt-[16px] leading-[15px] whitespace-pre">
        {"Undefined variable.\n - Variable: comp1.acpr.rho_rigid\n - Global scope\nFailed to evaluate expression.\n - Expression: comp1.acpr.rho_rigid"}
      </p>
      <div className="mt-[9px] flex h-5 items-center justify-between pl-[2px]">
        <a href="#more" className="text-[#0a62c8] underline">More information</a>
        <button type="button" className="h-5 w-[70px] rounded-[2px] border border-[#99c9ef] bg-linear-to-b from-[#f2f2f2] to-[#e6e7e8] leading-[18px]">OK</button>
      </div>
    </div>
  );
}

export default function App() {
  return (
    <div className="relative flex h-screen flex-col overflow-hidden bg-[#fafbff] font-['Open_Sans','Noto_Sans',sans-serif] text-[12px] text-black">
      <Ribbon />
      <main className="flex min-h-0 flex-1 gap-[5px] pt-1">
        <ModelBuilder />
        <Settings />
        <div className="flex min-w-0 flex-1 flex-col gap-[5px]">
          <Graphics />
          <Messages />
        </div>
      </main>
      <ErrorDialog />
    </div>
  );
}
